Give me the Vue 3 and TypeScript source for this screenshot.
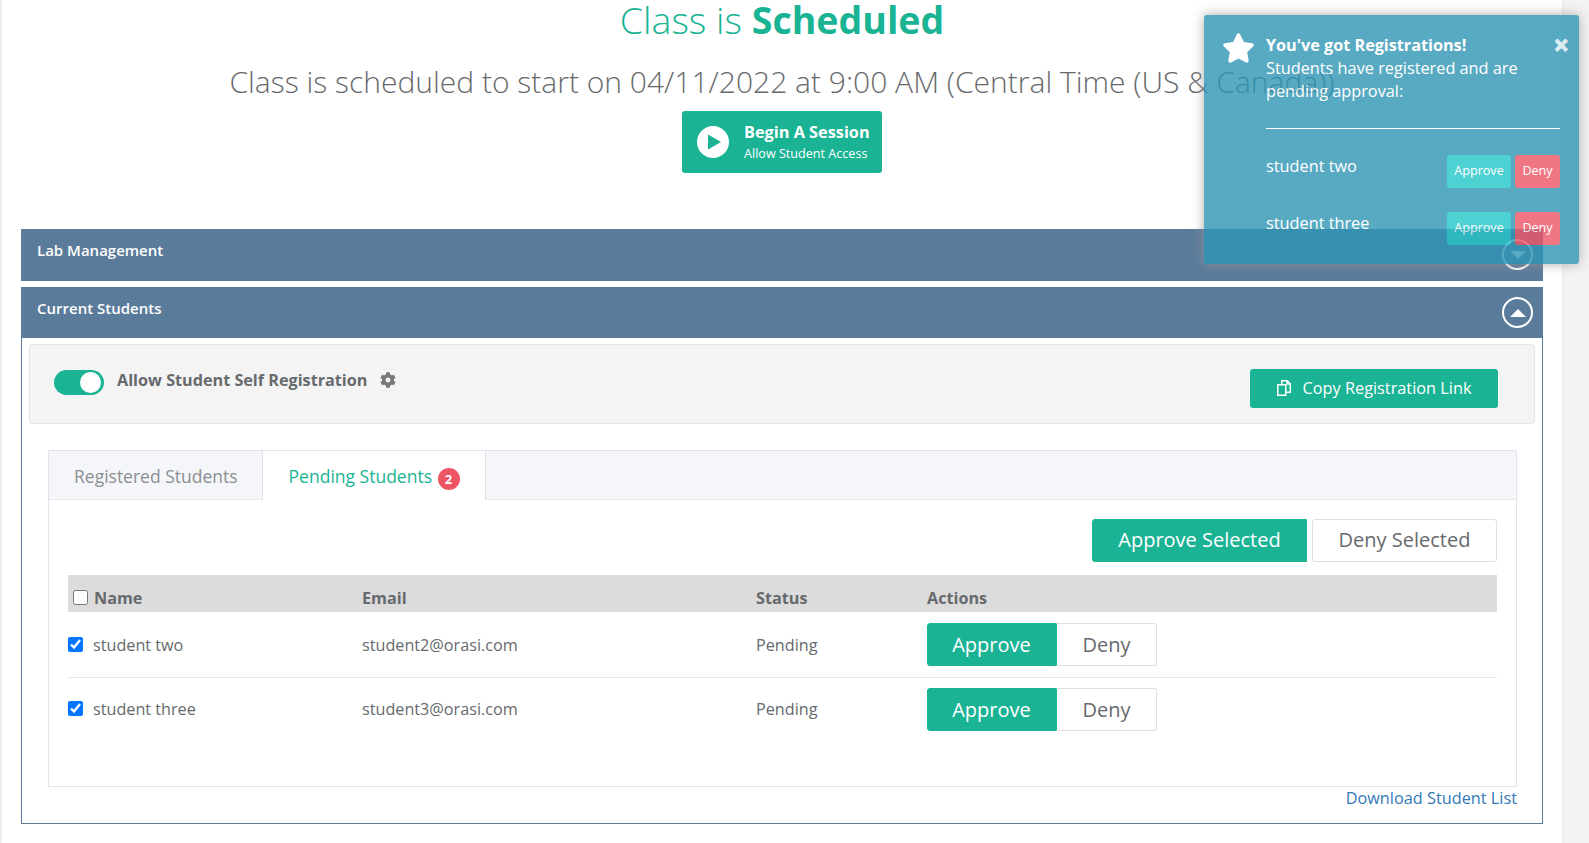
<script setup lang="ts">
interface PendingStudent {
  name: string
  email: string
}

const students: PendingStudent[] = [
  { name: 'student two', email: 'student2@orasi.com' },
  { name: 'student three', email: 'student3@orasi.com' },
]
</script>

<template>
  <div class="page">
    <main class="content">
      <h1 class="title">Class is <strong>Scheduled</strong></h1>
      <h2 class="subtitle">Class is scheduled to start on 04/11/2022 at 9:00 AM (Central Time (US &amp; Canada))</h2>
      <div class="begin-wrap">
        <button class="begin-btn" type="button">
          <svg class="play" viewBox="0 0 32 32">
            <circle cx="16" cy="16" r="16" fill="#fff" />
            <path d="M11 8.5 L24 16 L11 23.5 Z" fill="#1ab394" />
          </svg>
          <span class="begin-text">
            <b>Begin A Session</b>
            <small>Allow Student Access</small>
          </span>
        </button>
      </div>

      <section class="panel collapsed">
        <header class="panel-head">
          <span>Lab Management</span>
          <span class="chevron"><i class="tri down"></i></span>
        </header>
      </section>

      <section class="panel">
        <header class="panel-head">
          <span>Current Students</span>
          <span class="chevron"><i class="tri up"></i></span>
        </header>
        <div class="panel-body">
          <div class="well">
            <div class="well-left">
              <span class="toggle"><i></i></span>
              <span class="toggle-label">Allow Student Self Registration</span>
              <svg class="gear" viewBox="0 0 512 512">
                <path fill="#77797b" d="M487.4 315.7l-42.6-24.6c4.3-23.2 4.3-47 0-70.2l42.6-24.6c4.9-2.8 7.1-8.6 5.5-14-11.1-35.6-30-67.8-54.7-94.6-3.8-4.1-10-5.1-14.8-2.3L380.8 110c-17.9-15.4-38.5-27.3-60.8-35.1V25.8c0-5.6-3.9-10.5-9.4-11.7-36.7-8.2-74.3-7.8-109.2 0-5.5 1.2-9.4 6.1-9.4 11.7V75c-22.2 7.9-42.8 19.8-60.8 35.1L88.7 85.5c-4.9-2.8-11-1.9-14.8 2.3-24.7 26.7-43.6 58.9-54.7 94.6-1.7 5.4.6 11.2 5.5 14L67.3 221c-4.3 23.2-4.3 47 0 70.2l-42.6 24.6c-4.9 2.8-7.1 8.6-5.5 14 11.1 35.6 30 67.8 54.7 94.6 3.8 4.1 10 5.1 14.8 2.3l42.6-24.6c17.9 15.4 38.5 27.3 60.8 35.1v49.2c0 5.6 3.9 10.5 9.4 11.7 36.7 8.2 74.3 7.8 109.2 0 5.5-1.2 9.4-6.1 9.4-11.7v-49.2c22.2-7.9 42.8-19.8 60.8-35.1l42.6 24.6c4.9 2.8 11 1.9 14.8-2.3 24.7-26.7 43.6-58.9 54.7-94.6 1.5-5.5-.7-11.3-5.6-14.1zM256 336c-44.1 0-80-35.9-80-80s35.9-80 80-80 80 35.9 80 80-35.9 80-80 80z" />
              </svg>
            </div>
            <button class="copy-btn" type="button">
              <svg class="copy-icon" viewBox="0 0 14 16">
                <path d="M.8 4.8h8v10.4h-8z M4.8 4.8V.8h5.5l3 3v8.4H8.8 M10 .8v3.2h3.2" fill="none" stroke="#fff" stroke-width="1.5" />
              </svg>
              <span>Copy Registration Link</span>
            </button>
          </div>

          <div class="tabs">
            <nav class="tab-nav">
              <a class="tab">Registered Students</a>
              <a class="tab active">Pending Students <span class="badge">2</span></a>
            </nav>
            <div class="tab-pane">
              <div class="bulk">
                <button class="btn primary" type="button">Approve Selected</button>
                <button class="btn plain" type="button">Deny Selected</button>
              </div>
              <table class="students">
                <thead>
                  <tr>
                    <th class="col-name"><input class="check head-check" type="checkbox" />Name</th>
                    <th class="col-email">Email</th>
                    <th class="col-status">Status</th>
                    <th>Actions</th>
                  </tr>
                </thead>
                <tbody>
                  <tr v-for="s in students" :key="s.email">
                    <td><input class="check" type="checkbox" checked />{{ s.name }}</td>
                    <td>{{ s.email }}</td>
                    <td>Pending</td>
                    <td>
                      <div class="row-actions">
                        <button class="btn primary small-w" type="button">Approve</button>
                        <button class="btn plain small-d" type="button">Deny</button>
                      </div>
                    </td>
                  </tr>
                </tbody>
              </table>
            </div>
          </div>
          <div class="download"><a>Download Student List</a></div>
        </div>
      </section>
    </main>

    <aside class="toast">
      <svg class="star" viewBox="0 0 576 512">
        <path fill="#fff" d="M259.3 17.8L194 150.2 47.9 171.5c-26.2 3.8-36.7 36.1-17.7 54.6l105.7 103-25 145.5c-4.5 26.3 23.2 46 46.4 33.7L288 439.6l130.7 68.7c23.2 12.2 50.9-7.4 46.4-33.7l-25-145.5 105.7-103c19-18.5 8.5-50.8-17.7-54.6L382 150.2 316.7 17.8c-11.7-23.6-45.6-23.9-57.4 0z" />
      </svg>
      <div class="toast-main">
        <div class="toast-title">You've got Registrations!</div>
        <div class="toast-msg">Students have registered and are pending approval:</div>
        <hr class="toast-rule" />
        <div v-for="s in students" :key="s.name" class="toast-row">
          <span>{{ s.name }}</span>
          <span class="toast-btns">
            <button class="mini approve" type="button">Approve</button>
            <button class="mini deny" type="button">Deny</button>
          </span>
        </div>
      </div>
      <span class="toast-close">×</span>
    </aside>
  </div>
</template>

<style>
html,
body {
  margin: 0;
  height: 100%;
  overflow: hidden;
  background: #f3f3f4;
}
</style>

<style scoped>
.page {
  position: relative;
  height: 843px;
  overflow: hidden;
  background: #f3f3f4;
  font-family: 'Open Sans', 'Liberation Sans', sans-serif;
  color: #676a6c;
}

.content {
  box-sizing: border-box;
  width: 1560px;
  height: 843px;
  margin-left: 2px;
  padding: 0 19px;
  background: #fff;
  box-shadow: 0 0 2px #d8d8d8;
}

.title {
  margin: 0;
  height: 42px;
  font-size: 37.5px;
  line-height: 40px;
  font-weight: 300;
  text-align: center;
  color: #1ab394;
}

.title strong {
  font-weight: 700;
}

.subtitle {
  margin: 19px 0 0;
  height: 41px;
  font-size: 30px;
  line-height: 41px;
  font-weight: 300;
  text-align: center;
  color: #676a6c;
  white-space: nowrap;
}

.begin-wrap {
  display: flex;
  justify-content: center;
  margin-top: 9px;
}

.begin-btn {
  display: flex;
  align-items: center;
  gap: 15px;
  box-sizing: border-box;
  width: 200px;
  height: 62px;
  padding: 0 0 0 15px;
  border: 0;
  border-radius: 3px;
  background: #1ab394;
  color: #fff;
  font-family: inherit;
  text-align: left;
}

.play {
  width: 32px;
  height: 32px;
  flex: none;
}

.begin-text {
  display: flex;
  flex-direction: column;
}

.begin-text b {
  font-size: 16.3px;
  line-height: 22px;
}

.begin-text small {
  margin-top: 1px;
  font-size: 12.6px;
  line-height: 20px;
}

.panel {
  margin-top: 56px;
  border: 1px solid #5b7b9b;
  border-top: 0;
}

.panel.collapsed + .panel {
  margin-top: 6px;
}

.panel-head {
  display: flex;
  justify-content: space-between;
  align-items: flex-start;
  box-sizing: border-box;
  height: 51px;
  padding: 11px 9px 0 15px;
  background: #5b7b9b;
  color: #fff;
  font-size: 15px;
  line-height: 20px;
  font-weight: 600;
}

.chevron {
  display: flex;
  align-items: center;
  justify-content: center;
  box-sizing: border-box;
  width: 31px;
  height: 31px;
  margin-top: -1px;
  border: 2px solid #fff;
  border-radius: 50%;
}

.tri {
  width: 0;
  height: 0;
  border-left: 8px solid transparent;
  border-right: 8px solid transparent;
}

.tri.up {
  border-bottom: 8px solid #fff;
}

.tri.down {
  border-top: 8px solid #fff;
}

.panel-body {
  padding: 6px 7px 0;
  height: 485px;
  box-sizing: border-box;
}

.well {
  display: flex;
  justify-content: space-between;
  box-sizing: border-box;
  height: 80px;
  padding: 25px 36px 0 24px;
  background: #f4f4f4;
  border: 1px solid #e3e3e3;
  border-radius: 4px;
}

.well-left {
  display: flex;
  align-items: flex-start;
  height: 25px;
}

.toggle {
  position: relative;
  display: block;
  width: 50px;
  height: 25px;
  border-radius: 13px;
  background: #1ab394;
}

.toggle i {
  position: absolute;
  top: 2px;
  right: 3px;
  width: 21px;
  height: 21px;
  border-radius: 50%;
  background: #fff;
}

.toggle-label {
  margin: -1px 0 0 13px;
  font-size: 16.2px;
  line-height: 22px;
  font-weight: 700;
}

.gear {
  width: 16px;
  height: 16px;
  margin: 2px 0 0 13px;
}

.copy-btn {
  display: flex;
  align-items: center;
  justify-content: center;
  gap: 12px;
  width: 248px;
  height: 39px;
  padding: 0 0 2px;
  border: 0;
  border-radius: 3px;
  background: #1ab394;
  color: #fff;
  font-family: inherit;
  font-size: 16.3px;
  margin-top: -1px;
}

.copy-icon {
  width: 14px;
  height: 16px;
}

.tabs {
  margin: 26px 18px 0 19px;
  border: 1px solid #e1e3ec;
  height: 337px;
  box-sizing: border-box;
}

.tab-nav {
  display: flex;
  height: 48px;
  background: #f4f6fa;
  border-bottom: 1px solid #e7eaec;
}

.tab {
  box-sizing: border-box;
  height: 49px;
  padding: 0 24px 0 25px;
  font-size: 17.5px;
  line-height: 50px;
  color: #8c8e90;
  white-space: nowrap;
}

.tab.active {
  padding: 0 25px 0 26px;
  background: #fff;
  color: #1ab394;
  border-left: 1px solid #e1e3ec;
  border-right: 1px solid #e1e3ec;
}

.badge {
  display: inline-block;
  width: 22px;
  height: 22px;
  margin-left: 1px;
  border-radius: 50%;
  background: #ed5565;
  color: #fff;
  font-size: 13px;
  line-height: 22px;
  font-weight: 700;
  text-align: center;
  vertical-align: -1px;
}

.tab-pane {
  padding: 19px 19px 0;
}

.bulk {
  display: flex;
  justify-content: flex-end;
  gap: 5px;
}

.btn {
  box-sizing: border-box;
  height: 43px;
  border-radius: 3px;
  font-family: inherit;
  font-size: 20px;
}

.btn.primary {
  border: 1px solid #1ab394;
  background: #1ab394;
  color: #fff;
}

.btn.plain {
  border: 1px solid #e0e0e0;
  background: #fff;
  color: #676a6c;
}

.bulk .btn {
  padding: 0 0 2px;
}

.bulk .primary {
  width: 215px;
  border-radius: 3px 0 0 3px;
}

.bulk .plain {
  width: 185px;
}

.students {
  width: 100%;
  margin-top: 13px;
  border-collapse: collapse;
  table-layout: fixed;
  font-size: 16.2px;
}

.students th {
  height: 37px;
  padding: 9px 0 0;
  box-sizing: border-box;
  background: #dcdcdc;
  font-weight: 700;
  text-align: left;
}

.students td {
  height: 65px;
  padding: 0;
  box-sizing: border-box;
  border-bottom: 1px solid #e7eaec;
}

.students tbody tr:first-child td:not(:last-child) {
  padding-top: 2px;
}

.students tbody tr:last-child td:not(:last-child) {
  padding-bottom: 2px;
}

.students tbody tr:last-child td {
  border-bottom: 0;
}

.col-name {
  width: 294px;
}

.col-email {
  width: 394px;
}

.col-status {
  width: 171px;
}

.check {
  width: 15px;
  height: 15px;
  margin: 0 10px 0 0;
  vertical-align: -1px;
}

.head-check {
  margin-left: 5px;
  margin-right: 6px;
}

.row-actions {
  display: flex;
}

.small-w {
  width: 129px;
  border-radius: 3px 0 0 3px !important;
}

.small-d {
  width: 101px;
  border-left-color: #1ab394 !important;
  border-radius: 0 3px 3px 0;
}

.download {
  margin: 0 18px 0 0;
  text-align: right;
  font-size: 16.3px;
  line-height: 22px;
  color: #337ab7;
}

.toast {
  position: absolute;
  top: 15px;
  left: 1204px;
  display: flex;
  box-sizing: border-box;
  width: 375px;
  height: 249px;
  padding: 19px 19px 0 62px;
  border-radius: 3px;
  background: #2f96b4;
  opacity: 0.8;
  box-shadow: 0 0 12px #999;
  color: #fff;
  font-size: 16.3px;
  line-height: 23px;
}

.star {
  position: absolute;
  top: 18px;
  left: 18px;
  width: 33px;
  height: 30px;
}

.toast-main {
  flex: 1;
}

.toast-title {
  font-size: 16.2px;
  font-weight: 700;
}

.toast-rule {
  margin: 25px 0 26px;
  border: 0;
  border-top: 1px solid #fff;
}

.toast-row {
  display: flex;
  justify-content: space-between;
  height: 57px;
}

.toast-btns {
  display: flex;
  align-items: flex-start;
  gap: 4px;
}

.mini {
  box-sizing: border-box;
  height: 33px;
  padding: 0 0 2px;
  border: 0;
  border-radius: 3px;
  color: #fff;
  font-family: inherit;
  font-size: 12.6px;
}

.approve {
  width: 64px;
  background: #23c6c8;
}

.deny {
  width: 45px;
  background: #ed5565;
}

.toast-close {
  position: absolute;
  top: 17px;
  right: 9px;
  font-size: 30px;
  line-height: 26px;
  font-weight: 800;
  opacity: 0.8;
}
</style>
